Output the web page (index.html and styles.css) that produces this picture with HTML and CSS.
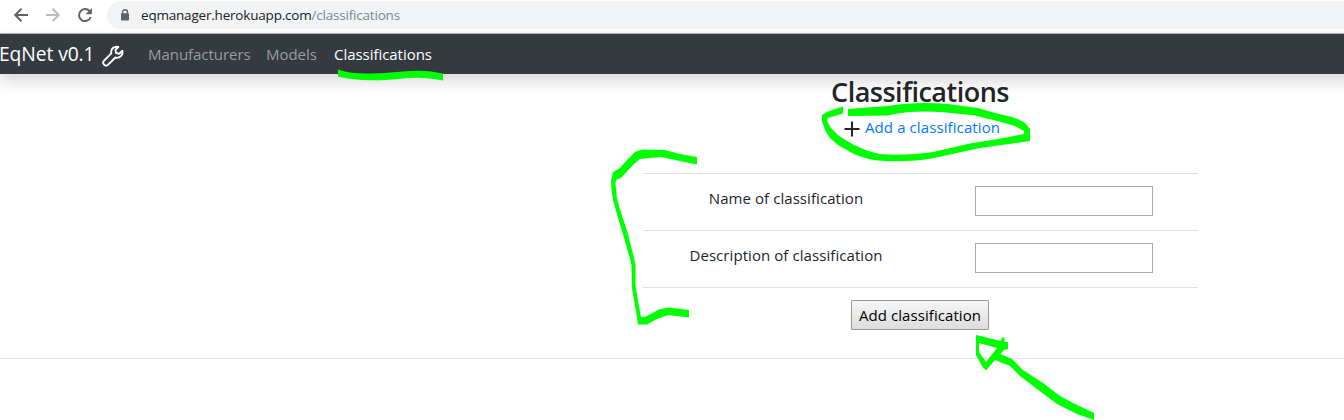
FILE: index.html
```html
<!DOCTYPE html>
<html lang="en">
<head>
<meta charset="utf-8">
<title>Classifications</title>
<link rel="stylesheet" href="styles.css">
</head>
<body>
<div class="browser-bar">
  <svg class="browser-icons" width="107" height="33" viewBox="0 0 107 33" fill="none" stroke-width="2">
    <path stroke="#5f6368" d="M28 15H15.5M21.5 8.7L15.2 15l6.3 6.3"/>
    <path stroke="#babcbe" d="M46 15h12.5M52.500 8.700L58.800 15l-6.300 6.300"/>
    <path stroke="#5f6368" d="M89.600 11.200A6 6 0 1 0 90.700 17"/>
    <path fill="#5f6368" d="M91.900 8v6.300h-6.300z"/>
  </svg>
  <div class="address">
    <svg width="10" height="13" viewBox="0 0 10 13"><path fill="none" stroke="#5f6368" stroke-width="1.4" d="M2.500 5V3.200a2.500 2.500 0 0 1 5 0V5"/><rect x="1" y="4.200" width="8" height="7.300" rx="1" fill="#5f6368"/></svg>
    <span class="url">eqmanager.herokuapp.com<span class="path">/classifications</span></span>
  </div>
</div>
<nav class="navbar">
  <span class="brand">EqNet v0.1</span>
  <svg class="wrench" width="22" height="22" viewBox="0 0 22 22" fill="none" stroke="#fff" stroke-width="1.900" stroke-linejoin="round"><path d="M16.300 2C12.300 .8 8.300 3.800 9.300 8.400L1.900 15.800c-2.300 2.500 1.500 6.400 4 4.100l7.500-7.400c4.300 1 8.100-2.500 6.900-6.700l-3 2.900-3.200-.7-.7-3.100z"/></svg>
  <a class="nav-link manufacturers">Manufacturers</a>
  <a class="nav-link models">Models</a>
  <a class="nav-link active">Classifications</a>
</nav>
<main class="content">
  <h1 class="title">Classifications</h1>
  <div class="add-row">
    <svg width="16" height="16" viewBox="0 0 16 16"><path d="M8 .5v15M.5 8h15" stroke="#212529" stroke-width="2"/></svg>
    <a class="add-link">Add a classification</a>
  </div>
  <form class="form">
    <div class="row"><label class="label name">Name of classification</label><div class="field"><input class="input" type="text"></div></div>
    <div class="row"><label class="label description">Description of classification</label><div class="field"><input class="input" type="text"></div></div>
    <div class="actions"><button class="button" type="button">Add classification</button></div>
  </form>
</main>
<hr class="rule">
<svg class="marks" width="1344" height="420" viewBox="0 0 1344 420" fill="#0f0">
  <path d="M338 69.500Q348 73 360 73.300 381 74 397 72 419 69.800 431 71.500L443 73.500V80.500L437 79.500Q422 76.500 405 78.300 373 82 352 79 343 77.800 338 76.500z"/>
  <path d="M843 106.500L838 108 828 111.500 822 115V121L825 130 830 138 838 145 853 153.500Q866 160 885 161 913 162 934 158L980 148 1030 141V129L1024 122 1014 117.500 995 113 978 108 948 104Q915 101.500 888 106L848 109V116L888 115.500Q912 109.500 946 112.500L975 115.500 997 121 1015 126 1024 131 1024 134 998 139 970 143.500 933 152Q903 156 880 154 867 151.500 853 144.500L839 136 831 128 827 121 828 118 843 113.500z"/>
  <path d="M697 157L680 154 665 150 642 149.500 635 152 627 160 620 168 613 172 611 181 611.500 190 613 200 617.500 216 623.500 236 629 255 631.500 265 632 288 634 300 636 311 638 324.500H647L657 319 668 315 689 317.500V310L669 307.500 660 309 645 317H641L637.500 298 635.500 285 635.500 265 633 254 628 234 621.500 214 617 199 615.500 184 616 180 622 177 632 166 640 159 661 157 680 161 697 164.500z"/>
  <path fill-rule="evenodd" d="M976 335L1001 341 1002 337.500H1004.500V342H1008V349L1004 350 1000.500 354 1012 359 1023 370 1043 383 1060 396 1075 404 1094 413V420L1077 414 1057 404 1033 386 1020 376 1010 366 995 360 986 370.500 982 366 976 355zM979 343V352L986 362 997 348z"/>
</svg>
</body>
</html>
```
FILE: styles.css
```css
* { box-sizing: border-box; }
body { margin: 0; width: 1344px; height: 420px; overflow: hidden; position: relative; background: #fff; color: #212529; font: 15px/24px "Open Sans", "Noto Sans", sans-serif; }
.browser-bar { height: 34px; display: flex; border-bottom: 1px solid #aeb5b3; }
.browser-icons { flex: none; }
.address { width: 1260px; flex: none; height: 28px; margin-top: 1px; padding-left: 13px; display: flex; align-items: center; border-radius: 14px; background: #f1f3f4; }
.url { margin-left: 11px; font-size: 13.5px; letter-spacing: -.2px; white-space: nowrap; color: #202124; }
.path { color: #80868b; }
.navbar { width: 1380px; height: 40px; display: flex; align-items: center; background: #343a40; box-shadow: 0 8px 16px rgba(0,0,0,.15); white-space: nowrap; }
.brand { width: 102px; margin-left: -1px; margin-right: 1px; font-size: 19.3px; letter-spacing: -.1px; color: #fff; }
.wrench { flex: none; margin-top: 4px; }
.nav-link { color: #999c9f; letter-spacing: -.04px; }
.manufacturers { margin-left: 24px; width: 118px; }
.models { width: 68px; }
.nav-link.active { color: #fff; }
.content { width: 555px; margin-left: 643px; }
.title { margin: 0; padding-top: 1px; height: 42px; text-align: center; font-size: 27px; line-height: 34px; font-weight: 600; letter-spacing: -.5px; text-indent: -1px; }
.add-row { height: 57px; padding-left: 201px; display: flex; align-items: flex-start; gap: 5px; white-space: nowrap; }
.add-row svg { margin-top: 5px; }
.add-link { margin-top: -1px; color: #007bff; letter-spacing: .1px; }
.row { height: 57px; display: grid; grid-template-columns: 286px 269px; border-top: 1px solid #dee2e6; padding-top: 12px; }
.label { text-align: center; letter-spacing: .07px; }
.field { padding-left: 46px; }
.input { display: block; width: 178px; height: 30px; border: 1px solid #a9a9a9; background: #fff; padding: 1px; }
.actions { border-top: 1px solid #dee2e6; padding: 12px 1px 0 0; display: flex; justify-content: center; height: 71px; }
.button { width: 138px; height: 30px; padding: 0; border: 1px solid #999; border-radius: 1px; background: linear-gradient(#f6f6f6, #ddd); color: #000; font: 15px/24px "Open Sans", sans-serif; letter-spacing: .07px; white-space: nowrap; }
.rule { margin: 0; border: 0; height: 1px; background: #e3e3e3; }
.marks { position: absolute; left: 0; top: 0; pointer-events: none; }
```
